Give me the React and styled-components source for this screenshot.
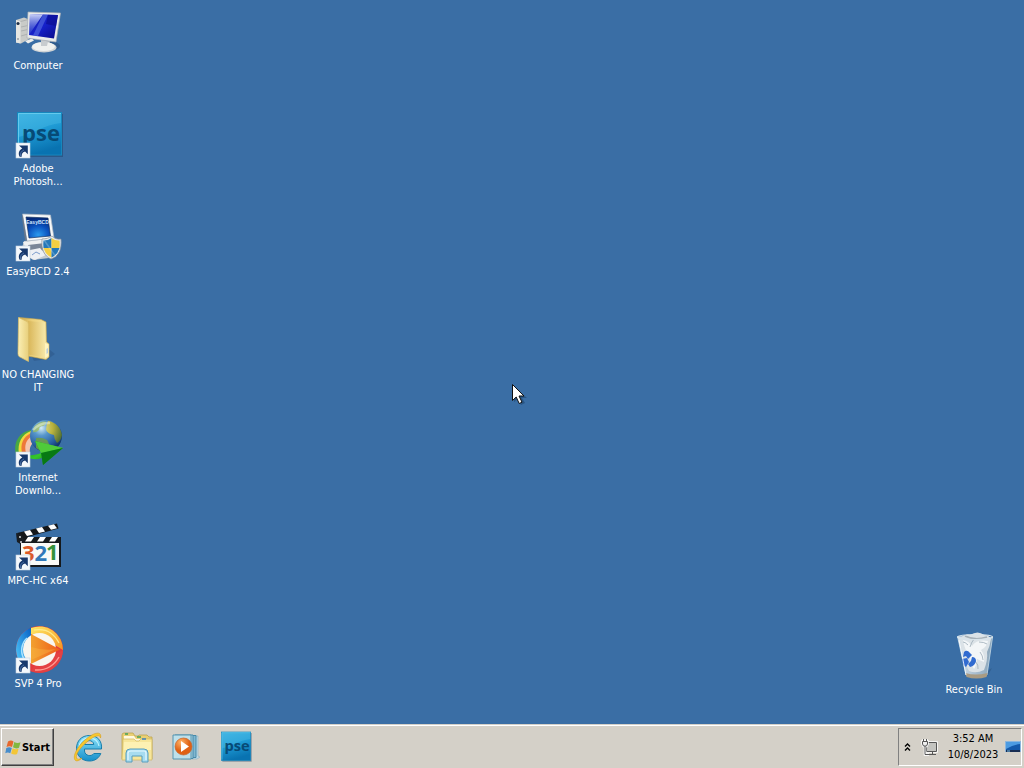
import React from 'react';
import styled, { createGlobalStyle } from 'styled-components';

const GlobalStyle = createGlobalStyle`
  * { box-sizing: border-box; }
  body {
    margin: 0;
    background: #3a6ea5;
    font-family: "DejaVu Sans Condensed", "DejaVu Sans", sans-serif;
    font-size: 11px;
    cursor: default;
  }
  button { font: inherit; margin: 0; padding: 0; border: 0; background: none; }
  svg { display: block; }
`;

const Screen = styled.div`
  min-height: 100vh;
  display: flex;
  flex-direction: column;
  position: relative;
`;

const Desktop = styled.main`
  flex: 1;
  display: flex;
  justify-content: space-between;
  padding: 8px 12px 28px 0;
`;

const IconColumn = styled.div`
  display: grid;
  grid-template-rows: ${(p) => (p.$rows > 1 ? `repeat(${p.$rows - 1}, 103px) auto` : 'auto')};
  width: 76px;
  align-self: ${(p) => (p.$bottom ? 'flex-end' : 'flex-start')};
`;

const Shortcut = styled.button`
  display: flex;
  flex-direction: column;
  align-items: center;
  justify-content: flex-start;
  gap: 3px;
  color: #fff;
  line-height: 13px;
  white-space: pre;
`;

const Taskbar = styled.footer`
  height: 44px;
  display: flex;
  align-items: stretch;
  padding: 2px 2px 2px 1px;
  background: #d4d0c8;
  border-top: 1px solid #d4d0c8;
  box-shadow: inset 0 1px 0 #fff;
`;

const StartButton = styled.button`
  display: flex;
  align-items: center;
  justify-content: center;
  width: 53px;
  margin-top: 1px;
  font-weight: bold;
  color: #000;
  background: #d4d0c8;
  border: 1px solid;
  border-color: #fff #404040 #404040 #fff;
  box-shadow: inset -1px -1px 0 #808080;
`;

const QuickLaunch = styled.nav`
  display: flex;
  flex: 1;
  gap: 1px;
  padding-left: 10px;
`;

const LaunchButton = styled.button`
  width: 48px;
  display: grid;
  place-items: center;
`;

const Tray = styled.div`
  display: flex;
  align-items: center;
  margin-top: 1px;
  width: 124px;
  border: 1px solid;
  border-color: #808080 #fff #fff #808080;
`;

const TrayButton = styled.button`
  display: grid;
  place-items: center;
  width: ${(p) => p.$width}px;
  height: 100%;
`;

const Clock = styled.time`
  flex: 1;
  text-align: center;
  line-height: 16px;
  color: #000;
`;

const Pointer = styled.svg`
  position: absolute;
  left: 50%;
  top: 50%;
  pointer-events: none;
`;

const Art = ({ children, size = 48 }) => (
  <svg width={size} height={size} viewBox="0 0 48 48" aria-hidden="true" overflow="visible">
    {children}
  </svg>
);

const ArrowBadge = () => (
  <g>
    <rect x="2" y="32" width="14" height="15" fill="#f4f8fc" stroke="#c3d2e2" strokeWidth=".6" />
    <path d="M5 34.500h8.800v8.800l-2.700-2.800c-3 .9-3.600 2.600-3.400 5.300H5.600c-2-4 .1-7 2.700-8.200z" fill="#17386c" />
    <path d="M6.600 45c-.6-3 .8-4.900 3.400-6" fill="none" stroke="#5d87bd" strokeWidth=".7" />
  </g>
);

const ComputerIcon = () => (
  <Art>
    <defs>
      <linearGradient id="pcScreen" x1="0" y1="0" x2="1" y2="1">
        <stop offset="0" stopColor="#1a22b0" />
        <stop offset=".5" stopColor="#1520ca" />
        <stop offset="1" stopColor="#0a0b86" />
      </linearGradient>
      <linearGradient id="pcGlare" x1="0" y1="0" x2="0" y2="1">
        <stop offset="0" stopColor="#dfe6ff" stopOpacity=".9" />
        <stop offset="1" stopColor="#4463dd" stopOpacity=".25" />
      </linearGradient>
    </defs>
    <ellipse cx="34" cy="38" rx="12" ry="5" fill="#274f7e" opacity=".6" />
    <path d="M2 12l8-2.500 5 2V31l-8 4.500-5-1z" fill="#c9cbc8" />
    <path d="M2 12l4.500 1.500V35.500L2 34.500z" fill="#e6e6e2" />
    <path d="M6.500 13.500l8-2M7 19l7-1.500M7 23l7-1.500M7 28l7-2" stroke="#a3a6a8" strokeWidth=".7" />
    <circle cx="4" cy="15.500" r="1.600" fill="#203047" />
    <circle cx="4" cy="31" r=".8" fill="#66717c" />
    <path d="M11 33l7-2.500 2 2-6 3z" fill="#eeeeeb" />
    <path d="M27 31l9 2-1 6h-8z" fill="#b4b9bd" />
    <ellipse cx="30" cy="39.500" rx="12.500" ry="5" fill="#cfd3d5" />
    <ellipse cx="29.500" cy="38.500" rx="11.500" ry="4.500" fill="#f0f1ef" />
    <path d="M27 32l7 1.500-1 4.500h-6z" fill="#c8cccf" />
    <path d="M14 4l32.500 1L42 34 13 30z" fill="#e9ebea" stroke="#a6acb4" strokeWidth=".7" />
    <path d="M16 6l28 1-4 23.500-25-3.500z" fill="url(#pcScreen)" />
    <path d="M16 6l13 .5L17 24l-2 3z" fill="url(#pcGlare)" />
    <path d="M29 6.500h5L24 28l-5-.5z" fill="#5e78e6" opacity=".55" />
    <path d="M34 6.700l10 .3-2 11-10-2z" fill="#0a0c8f" opacity=".65" />
  </Art>
);

const PseIcon = ({ badge, size }) => (
  <Art size={size}>
    <defs>
      <linearGradient id="pseBlue" x1="0" y1="0" x2=".3" y2="1">
        <stop offset="0" stopColor="#36aee0" />
        <stop offset=".5" stopColor="#1f9bd5" />
        <stop offset="1" stopColor="#0973b1" />
      </linearGradient>
    </defs>
    <rect x="5" y="3" width="44" height="43" fill="#1d3f66" opacity=".45" />
    <rect x="3.500" y="1.500" width="44" height="42.500" fill="url(#pseBlue)" stroke="#1687bd" />
    <path d="M4.500 43V2.500H47" fill="none" stroke="#64caed" />
    <path d="M5 3h42v9C30 14 18 23 5 26z" fill="#66d1f1" opacity=".25" />
    <text x="27" y="30" textAnchor="middle" fontFamily="'Open Sans', sans-serif" fontWeight="bold" fontSize="22" fill="#074a76">pse</text>
    {badge && <ArrowBadge />}
  </Art>
);

const EasyBcdIcon = () => (
  <Art>
    <defs>
      <radialGradient id="bcdScreen" cx=".5" cy=".85" r=".8">
        <stop offset="0" stopColor="#2b9bef" />
        <stop offset=".55" stopColor="#0a50bd" />
        <stop offset="1" stopColor="#042878" />
      </radialGradient>
    </defs>
    <path d="M10 27l22-3 9 8-6 12-16 2-12-9z" fill="#c5cbd1" />
    <path d="M9 28l24-3 3 6-24 4z" fill="#eff1f2" />
    <path d="M14 31l17-2-3 9-11 1z" fill="#7a8697" />
    <path d="M16 36l10-2 6 7-11 5-7-3z" fill="#edf0f4" />
    <path d="M18 41l4-3 4 2" fill="none" stroke="#7c9dcc" />
    <path d="M8.500 0l28 1L40 24l-27 3z" fill="#f7f8f8" stroke="#a9b5c2" strokeWidth=".7" />
    <path d="M8.500 0L13 27l-2-1L8 4z" fill="#69788b" />
    <path d="M12 3l22 1 2.500 18L15 24z" fill="url(#bcdScreen)" stroke="#153461" strokeWidth=".7" />
    <text x="23.500" y="10" textAnchor="middle" fontFamily="'Liberation Sans', sans-serif" fontWeight="bold" fontSize="5" fill="#cfe6ff">EasyBCD</text>
    <path d="M38 22c3 3 6 3.500 9 3 1 10-2 17-10 20-7-3-10-10-9-20 4 0 7-1 10-3z" fill="#e6e9ec" stroke="#87909a" strokeWidth=".7" />
    <path d="M37.500 24v10H29.500q-.5-4 0-7.500 5 0 8-2.500z" fill="#2478b8" />
    <path d="M37.500 24q4 3 8 2.500.5 3.500 0 7.500h-8z" fill="#f4cf43" />
    <path d="M37.500 34v9.500q-6-2.500-8-9.500z" fill="#f4cf43" />
    <path d="M37.500 34h8q-2 7-8 9.500z" fill="#2478b8" />
    <path d="M30 26l12 17" stroke="#fff" strokeWidth="1.500" opacity=".22" />
    <ArrowBadge />
  </Art>
);

const FolderIcon = () => (
  <Art>
    <defs>
      <linearGradient id="folderBack" x1="0" x2="1">
        <stop offset="0" stopColor="#c9a548" />
        <stop offset=".45" stopColor="#edd17b" />
        <stop offset="1" stopColor="#f6e6a4" />
      </linearGradient>
      <linearGradient id="folderFront" x1="0" x2="1">
        <stop offset="0" stopColor="#fbefb5" />
        <stop offset="1" stopColor="#e8cf7b" />
      </linearGradient>
      <linearGradient id="folderSheet" x1="0" x2="1">
        <stop offset="0" stopColor="#d9b658" />
        <stop offset="1" stopColor="#f6e6a6" />
      </linearGradient>
    </defs>
    <path d="M18 40l18-7 5 4-7 5-14 2z" fill="#244a78" opacity=".35" />
    <path d="M5 .5l22 2 5 2.500 .5 20 2.500 2V40l-3 2.500L14 39z" fill="url(#folderBack)" stroke="#cda94e" strokeWidth=".6" />
    <path d="M14 4l17 1.500v35l-17-3z" fill="url(#folderSheet)" />
    <path d="M31 26l3.500 1.500V39L31 41z" fill="#fff4bf" />
    <path d="M32.500 32l1.500-1v5l-1.500 1z" fill="#b8ccdb" />
    <path d="M4.500 .5l8.500 4q1.500 1 1.500 3v37L5 39.500q-1-1-1-3z" fill="url(#folderFront)" stroke="#d8bd68" strokeWidth=".7" />
  </Art>
);

const IdmIcon = () => (
  <Art>
    <defs>
      <radialGradient id="idmGlobe" cx=".35" cy=".25" r=".8">
        <stop offset="0" stopColor="#d6edf4" />
        <stop offset=".3" stopColor="#5797cc" />
        <stop offset=".7" stopColor="#285f9f" />
        <stop offset="1" stopColor="#0c2c5b" />
      </radialGradient>
      <radialGradient id="idmLand" gradientUnits="userSpaceOnUse" cx="27" cy="8" r="24">
        <stop offset="0" stopColor="#dfe59a" />
        <stop offset=".5" stopColor="#b9b13c" />
        <stop offset="1" stopColor="#3d6433" />
      </radialGradient>
      <linearGradient id="idmArrow" x1="0" x2="1" y2="1">
        <stop offset="0" stopColor="#087b1b" />
        <stop offset=".5" stopColor="#35c72c" />
        <stop offset="1" stopColor="#075a0d" />
      </linearGradient>
    </defs>
    <path d="M17 10C5 12-1 23 2 34l8 4c-3-10 1-17 10-18z" fill="#49a941" />
    <path d="M17 11C8 14 3 23 5 34l7 2c-2-9 2-15 9-17z" fill="#f1d83c" />
    <path d="M17 13C9 17 6 24 8 33l5 2c-1-8 2-12 8-15z" fill="#ed7839" />
    <path d="M18 16c-6 4-8 9-6 17l4 1c-1-7 1-10 6-13z" fill="#f5c5ad" />
    <circle cx="32" cy="16" r="16" fill="url(#idmGlobe)" />
    <path d="M20 7c3-4 8-6 12-5.500q0 3-3 4.500-4 0-4 4-3 3-6 2z" fill="#a0bd54" opacity=".7" />
    <path d="M34 1c8 1 13 7 14 14q-1 6-5 8-3-4-3-8-6-1-8-5 0-5 2-9z" fill="url(#idmLand)" />
    <path d="M22 18q6-1 11 2 3 4 2 9-7 4-13-1z" fill="#6f9d46" opacity=".85" />
    <path d="M19 10q7-8 17-7" fill="none" stroke="#eef7e7" strokeWidth="2.500" opacity=".5" />
    <path d="M8 32c3 4 12 4 19 1l-6-12 28 7-20 17-1-7c-8 3-16 0-20-6z" fill="url(#idmArrow)" />
    <path d="M21 21l28 7-22 5z" fill="#4fcb3a" />
    <path d="M27 33l22-5-20 17z" fill="#087914" />
    <ArrowBadge />
  </Art>
);

const MpcIcon = () => (
  <Art>
    <rect x="6" y="14" width="41" height="30" fill="#15191c" />
    <path d="M3 10L43 .5l1.500 5L6 16z" fill="#14171a" />
    <path d="M10 8.500l6-1.500 3 4.500-6 1.500zM22 5.500l6-1.500 3 4.500-6 1.500zM34 2.700l6-1.500 3 4-6 1.500z" fill="#fff" />
    <path d="M14 14h6l-3 4.500h-6zM26 14h6l-3 4.500h-6zM38 14h6l-3 4.500h-6z" fill="#fff" />
    <path d="M2 10l6 2 3 7-3 3-5-3z" fill="#181d22" />
    <circle cx="6" cy="14" r="1" fill="#d5dbe0" />
    <circle cx="7" cy="19" r="1" fill="#d5dbe0" />
    <path d="M7 20h38v22H7z" fill="#f9faf8" />
    <g fontFamily="'Open Sans', sans-serif" fontWeight="bold" fontSize="22">
      <text x="8" y="38" fill="#dc5a28">3</text>
      <text x="20.500" y="38" fill="#3179b9">2</text>
      <text x="32" y="37" fill="#35923b">1</text>
    </g>
    <ArrowBadge />
  </Art>
);

const SvpIcon = () => (
  <Art>
    <defs>
      <linearGradient id="svpOrange" x1="0" x2="1">
        <stop offset="0" stopColor="#f2a12f" />
        <stop offset="1" stopColor="#ee5c18" />
      </linearGradient>
      <linearGradient id="svpYellow" x1="0" x2="1" y2="1">
        <stop offset="0" stopColor="#ffe965" />
        <stop offset="1" stopColor="#f4911f" />
      </linearGradient>
      <linearGradient id="svpBlue" x1="0" x2="1" y1="1" y2="0">
        <stop offset="0" stopColor="#55cfff" />
        <stop offset="1" stopColor="#0861c4" />
      </linearGradient>
    </defs>
    <circle cx="25.500" cy="23.500" r="23.500" fill="#e33b3c" />
    <path d="M17 2A23.500 23.500 0 0 1 49 24L39 18 17 8z" fill="url(#svpYellow)" />
    <path d="M17 1.500A23.500 23.500 0 0 0 10 41l7-6z" fill="url(#svpBlue)" />
    <path d="M49 24A23.500 23.500 0 0 1 17 45l5-8 20-9z" fill="#e44143" />
    <circle cx="25.500" cy="23.500" r="16.500" fill="#f9f6ef" />
    <path d="M13 12a17 17 0 0 0-3 21" fill="none" stroke="#a9e3ff" strokeWidth="1.500" />
    <path d="M20 4q17-3 25 13" fill="none" stroke="#fff39c" strokeWidth="1.200" opacity=".8" />
    <path d="M45 31q-8 14-24 13" fill="none" stroke="#ff9b92" strokeWidth="1.500" />
    <path d="M17 8l29 15.500L17 38z" fill="url(#svpOrange)" />
    <path d="M17 21q13 4 25 2L17 34z" fill="#f9ba45" opacity=".4" />
    <ArrowBadge />
  </Art>
);

const RecycleIcon = () => (
  <Art>
    <defs>
      <linearGradient id="binGlass" x1="0" x2="1">
        <stop offset="0" stopColor="#e4edf3" stopOpacity=".95" />
        <stop offset=".45" stopColor="#b9cad7" stopOpacity=".9" />
        <stop offset="1" stopColor="#92aabb" stopOpacity=".9" />
      </linearGradient>
    </defs>
    <path d="M35 40l7-4-4 7-8 3z" fill="#24486f" opacity=".35" />
    <path d="M7.500 4.500l35 1L37 43q-10 4-21 0z" fill="url(#binGlass)" stroke="#c8dce8" strokeWidth=".8" />
    <path d="M10 6q5-5 10-3 8-5 14 0 5 0 7 4-1 7-4 13 1 8-3 18-8 4-15 1-5-8-6-18-3-7-3-15z" fill="#dbe2e7" />
    <path d="M13 8q6 1 9 6 5-7 16-5-1 6-7 9 4 5 3 12-5-2-7-3-1 8-3 10-4-6-4-13-6-7-7-16z" fill="#f5f8f9" opacity=".9" />
    <path d="M24 7q-3 4-4 8m9-5q5 0 8 2m-7 8q3 4 3 8m-8 1q4 4 3 8M18 13q-3-3-5-3" fill="none" stroke="#9dacb8" strokeWidth="1" opacity=".8" />
    <path d="M15 4q10 5 22 1" fill="none" stroke="#6f7d88" strokeWidth="1.500" opacity=".5" />
    <g fill="#316bd0">
      <path d="M14 20q3-3 6 1l2 2-4 4-2-3-3 1z" />
      <path d="M12 27l5-1 2 4-3 5q-4-2-4-8z" />
      <path d="M22 25q4 0 4 4-1 5-6 6l-2-3 3-3z" />
    </g>
    <ellipse cx="25" cy="5" rx="17.500" ry="2.500" fill="none" stroke="#d9e4eb" strokeWidth="1.200" />
    <path d="M15.500 41q10 3 22 0l-1 4q-10 3-20 0z" fill="#a99b83" />
    <path d="M9 8l7 35" stroke="#fff" opacity=".8" />
  </Art>
);

const WindowsFlag = () => (
  <svg width="17" height="17" viewBox="0 0 17 17" aria-hidden="true">
    <path d="M3 2.500q3-2 5.500 0L7 8Q4.500 6.500 1.500 8z" fill="#e6682e" />
    <path d="M9.300 3q3 2 6.200.3L14 8.800q-3 1.500-6-.5z" fill="#82b840" />
    <path d="M1.300 8.900q3-1.500 5.500 0l-1.500 5.300q-2.500-1.500-5 0z" fill="#478dcb" />
    <path d="M7.600 9.300q3 1.700 6 .5l-1.500 5.200q-3 1.300-6-.6z" fill="#f3c637" />
  </svg>
);

const IeIcon = () => (
  <svg width="32" height="32" viewBox="0 0 32 32" aria-hidden="true">
    <defs>
      <linearGradient id="ieBlue" x1="0" y1="0" x2="0" y2="1">
        <stop offset="0" stopColor="#8ce3fa" />
        <stop offset="1" stopColor="#168fca" />
      </linearGradient>
    </defs>
    <path d="M29.500 18c.8-8-4-13.500-12-13.500S4.500 10 4.500 17.500 10 30 17.500 30c5.500 0 9.500-3 11.300-7.500h-7c-2.500 3.500-8.800 2.500-9.300-2.500v-2zM12.500 13.500c.7-5 8.700-5.300 9.300 0z" fill="url(#ieBlue)" stroke="#167dac" strokeWidth="1" />
    <path d="M7 16c.5-6 5-9 10-9s9 3 10 8" fill="none" stroke="#bcf2ff" strokeWidth="1.200" />
    <path d="M3.500 29.500C-1 25 8 11 19 4.500c6-3.600 11-3.300 9.500 2.500-.5-3.500-4-2.500-9 .5C10 14 3 23 4.500 27c.7 1.800 3 1.500 5.500 0-2.500 2.500-5 3.500-6.500 2.500z" fill="#f8c82d" stroke="#d69d1d" strokeWidth=".6" />
  </svg>
);

const ExplorerIcon = () => (
  <svg width="34" height="32" viewBox="0 0 34 32" aria-hidden="true">
    <path d="M2 4q0-2 2-2h9l2 3h3l1-1h8l2 2h3v22H2z" fill="#e9cf73" stroke="#bda44e" strokeWidth=".8" />
    <path d="M4 5h10l2 3h15v4H4z" fill="#fff9df" />
    <path d="M3 8h11l2 2h3l2-2h11v21H2z" fill="#f7e69a" stroke="#cfb661" strokeWidth=".7" />
    <path d="M4 11h27v8H4z" fill="#fff5bd" opacity=".7" />
    <path d="M5 3h3M17 6h4" stroke="#44a359" strokeWidth="1.500" />
    <path d="M22 8h4" stroke="#3c82be" strokeWidth="1.500" />
    <path d="M6 31v-9q0-4 4-4h14q4 0 4 4v9h-6v-6H12v6z" fill="#a7dcf0" stroke="#579dbd" strokeWidth="1" />
    <path d="M8 29v-7q0-2 3-2h13q2 0 2 2v7" fill="none" stroke="#e7f9ff" strokeWidth="1.200" />
  </svg>
);

const MediaIcon = () => (
  <svg width="30" height="30" viewBox="0 0 30 30" aria-hidden="true">
    <defs>
      <radialGradient id="playOrange" cx=".35" cy=".25">
        <stop offset="0" stopColor="#ffb367" />
        <stop offset="1" stopColor="#df6114" />
      </radialGradient>
    </defs>
    <path d="M10 4h17v20l2 1-3 2H10z" fill="#bdd9e5" stroke="#8baebe" strokeWidth=".6" />
    <path d="M7 3.500h18v22H7z" fill="#80b7d0" stroke="#478aaa" />
    <path d="M4 3h18v23.500H4z" fill="#acd2df" stroke="#478aaa" />
    <path d="M2 3h18v24H2z" fill="#bee0ea" stroke="#5494b0" />
    <circle cx="12.500" cy="14.500" r="8.500" fill="url(#playOrange)" stroke="#c7662e" strokeWidth=".7" />
    <path d="M10 9l8 5.500-8 5.500z" fill="#fff" />
  </svg>
);

const shortcuts = [
  { label: 'Computer', icon: <ComputerIcon /> },
  { label: 'Adobe\nPhotosh...', icon: <PseIcon badge /> },
  { label: 'EasyBCD 2.4', icon: <EasyBcdIcon /> },
  { label: 'NO CHANGING\nIT', icon: <FolderIcon /> },
  { label: 'Internet\nDownlo...', icon: <IdmIcon /> },
  { label: 'MPC-HC x64', icon: <MpcIcon /> },
  { label: 'SVP 4 Pro', icon: <SvpIcon /> },
];

const launchers = [
  { label: 'Internet Explorer', icon: <IeIcon /> },
  { label: 'Windows Explorer', icon: <ExplorerIcon /> },
  { label: 'Windows Media Player', icon: <MediaIcon /> },
  { label: 'Photoshop Elements', icon: <PseIcon size={32} /> },
];

export default function App() {
  return (
    <Screen>
      <GlobalStyle />
      <Desktop>
        <IconColumn $rows={shortcuts.length}>
          {shortcuts.map(({ label, icon }) => (
            <Shortcut key={label} type="button">{icon}<span>{label}</span></Shortcut>
          ))}
        </IconColumn>
        <IconColumn $rows={1} $bottom>
          <Shortcut type="button"><RecycleIcon /><span>Recycle Bin</span></Shortcut>
        </IconColumn>
      </Desktop>
      <Taskbar>
        <StartButton type="button"><WindowsFlag />Start</StartButton>
        <QuickLaunch aria-label="Quick launch">
          {launchers.map(({ label, icon }) => (
            <LaunchButton key={label} type="button" aria-label={label}>{icon}</LaunchButton>
          ))}
        </QuickLaunch>
        <Tray>
          <TrayButton type="button" aria-label="Show hidden icons" $width={17}>
            <svg width="7" height="9" viewBox="0 0 7 9" aria-hidden="true">
              <path d="M1 3.500l2.500-2.500L6 3.500M1 7.500L3.500 5 6 7.500" fill="none" stroke="#000" strokeWidth="1.400" />
            </svg>
          </TrayButton>
          <TrayButton type="button" aria-label="Network" $width={26}>
            <svg width="17" height="17" viewBox="0 0 17 17" aria-hidden="true">
              <path d="M5.500 3.500h10v9h-10z" fill="#c9c9c5" stroke="#fff" strokeWidth="2.500" />
              <path d="M5.500 3.500h10v9h-10z" fill="#c4c4c0" stroke="#555" />
              <path d="M8 15.500h7M11.500 13v2" stroke="#555" />
              <path d="M1.500 2.500h5V5l-1 2h-3l-1-2zM2.500 0v2M5.500 0v2M4 7v8.500h4" fill="none" stroke="#fff" strokeWidth="2.500" />
              <path d="M4 7v8.500h4" fill="none" stroke="#555" />
              <path d="M1.500 2.500h5V5l-1 2h-3l-1-2zM2.500 0v2M5.500 0v2" fill="#eee" stroke="#555" />
            </svg>
          </TrayButton>
          <Clock dateTime="2023-10-08T03:52">3:52 AM<br />10/8/2023</Clock>
          <TrayButton type="button" aria-label="Show desktop" $width={17}>
            <svg width="16" height="14" viewBox="0 0 16 14" aria-hidden="true">
              <path d="M.5 1.500h15v10H.5z" fill="#1459aa" stroke="#8bb6de" />
              <path d="M1 2h14v2Q8 5 1 9z" fill="#4c9be2" />
              <path d="M1 10h14v2H1z" fill="#172d52" />
              <path d="M2 11h3" stroke="#7dc4ef" />
            </svg>
          </TrayButton>
        </Tray>
      </Taskbar>
      <Pointer width="16" height="22" viewBox="0 0 16 22" aria-hidden="true">
        <path d="M2 3v15l4-3 3 6 4-2-3-5h5z" fill="#183d65" opacity=".5" />
        <path d="M.5.5v16l3.700-3.500 3 6.500 2.800-1.300-3-6.200h5z" fill="#fff" stroke="#111" strokeWidth="1" />
      </Pointer>
    </Screen>
  );
}
